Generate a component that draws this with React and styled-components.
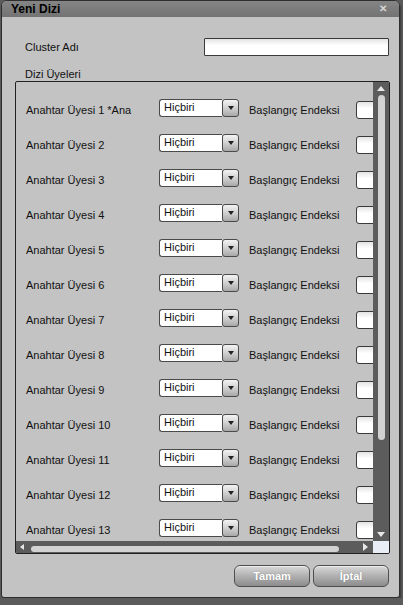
import React from "react";
import styled, { createGlobalStyle } from "styled-components";

const GlobalStyle = createGlobalStyle`
  html, body {
    margin: 0;
    padding: 0;
    background: #5b5b5b;
  }
  body {
    font-family: "Liberation Sans", Arial, sans-serif;
    font-size: 11px;
    color: #111;
  }
`;

const Dialog = styled.div`
  width: 399px;
  height: 598px;
  margin-left: 1px;
  background: #c3c3c3;
  border: 1px solid #2e2e2e;
  border-radius: 6px 6px 3px 3px;
  display: flex;
  flex-direction: column;
  overflow: hidden;
  box-sizing: border-box;
  box-shadow: 1px 2px 2px rgba(0, 0, 0, 0.4);
`;

const TitleBar = styled.div`
  height: 16px;
  background: linear-gradient(#858585, #737373);
  display: flex;
  align-items: center;
  justify-content: space-between;
  padding: 0 12px 0 9px;
  flex-shrink: 0;
`;

const Title = styled.span`
  font-weight: 700;
  font-size: 12px;
  color: #000;
`;

const Close = styled.span`
  color: #d6d6d6;
  font-size: 10px;
  font-weight: 700;
  line-height: 1;
`;

const Body = styled.div`
  flex: 1;
  display: flex;
  flex-direction: column;
  padding: 21px 10px 0 13px;
`;

const FieldRow = styled.div`
  display: flex;
  align-items: center;
  justify-content: space-between;
  padding-left: 10px;
  height: 18px;
`;

const Label = styled.span`
  white-space: nowrap;
`;

const Section = styled.div`
  margin-top: 11px;
  padding-left: 10px;
  height: 14px;
  line-height: 14px;
`;

const TextInput = styled.div`
  width: ${(p) => p.$w}px;
  height: 18px;
  box-sizing: border-box;
  background: linear-gradient(#e4e4e4, #ffffff 40%);
  border: 1px solid #3a3a3a;
  border-radius: ${(p) => (p.$round ? "3px" : "1px")};
  flex-shrink: 0;
`;

const Panel = styled.div`
  height: 473px;
  width: 375px;
  box-sizing: border-box;
  border: 1px solid #222;
  border-radius: 2px;
  display: grid;
  grid-template-columns: 1fr 16px;
  grid-template-rows: 1fr 12px;
  overflow: hidden;
`;

const Scroller = styled.div`
  overflow: hidden;
  padding: 10px 0 0 10px;
`;

const MemberRow = styled.div`
  height: 35px;
  display: flex;
  align-items: center;
  width: 420px;
`;

const MemberLabel = styled.span`
  width: 133px;
  white-space: nowrap;
`;

const Select = styled.div`
  width: 80px;
  height: 18px;
  box-sizing: border-box;
  display: flex;
  margin-top: -3px;
`;

const SelectValue = styled.div`
  flex: 1;
  background: #fff;
  border: 1px solid #4a4a4a;
  border-right: none;
  border-radius: 3px 0 0 3px;
  padding: 0 4px;
  line-height: 14px;
  font-size: 11px;
`;

const SelectButton = styled.div`
  width: 17px;
  box-sizing: border-box;
  border: 1px solid #4a4a4a;
  border-radius: 3px;
  background: linear-gradient(#f4f4f4, #c9c9c9 60%, #a8a8a8);
  display: flex;
  align-items: center;
  justify-content: center;
  &::after {
    content: "";
    border-left: 3px solid transparent;
    border-right: 3px solid transparent;
    border-top: 4px solid #222;
  }
`;

const EndLabel = styled.span`
  margin-left: 10px;
  width: 107px;
  white-space: nowrap;
`;

const VBar = styled.div`
  background: #5c5c5c;
  display: flex;
  flex-direction: column;
  align-items: center;
  padding: 4px 0 4px;
`;

const ArrowUp = styled.div`
  border-left: 4px solid transparent;
  border-right: 4px solid transparent;
  border-bottom: 5px solid #e8e8e8;
`;

const ArrowDown = styled.div`
  border-left: 4px solid transparent;
  border-right: 4px solid transparent;
  border-top: 5px solid #e8e8e8;
`;

const VThumb = styled.div`
  width: 7px;
  height: 345px;
  margin-top: 4px;
  background: #d2d2d2;
  border-radius: 4px;
`;

const Spacer = styled.div`
  flex: 1;
`;

const HBar = styled.div`
  background: #5c5c5c;
  display: flex;
  align-items: center;
  padding: 0 5px 0 4px;
`;

const ArrowLeft = styled.div`
  border-top: 3px solid transparent;
  border-bottom: 3px solid transparent;
  border-right: 4px solid #e8e8e8;
`;

const ArrowRight = styled.div`
  border-top: 4px solid transparent;
  border-bottom: 4px solid transparent;
  border-left: 5px solid #e8e8e8;
`;

const HThumb = styled.div`
  width: 308px;
  height: 6px;
  margin-left: 7px;
  margin-top: 4px;
  background: #d2d2d2;
  border-radius: 4px;
`;

const Corner = styled.div`
  background: #e9edf5;
`;

const Footer = styled.div`
  display: flex;
  justify-content: flex-end;
  gap: 3px;
  padding: 11px 0 0;
`;

const Button = styled.button`
  width: 76px;
  height: 22px;
  border: 1px solid #4e4e4e;
  border-radius: 6px;
  background: linear-gradient(#dadada, #b4b4b4 45%, #8c8c8c);
  color: #fff;
  font-family: "Liberation Sans", Arial, sans-serif;
  font-size: 11px;
  font-weight: 700;
  text-shadow: 0 0 1px #777;
  box-shadow: inset 0 1px 0 #eee;
  padding: 0;
`;

const members = Array.from({ length: 13 }, (_, i) =>
  i === 0 ? "Anahtar Üyesi 1 *Ana" : `Anahtar Üyesi ${i + 1}`
);

const App = () => (
  <>
    <GlobalStyle />
    <Dialog>
      <TitleBar>
        <Title>Yeni Dizi</Title>
        <Close>✕</Close>
      </TitleBar>
      <Body>
        <FieldRow>
          <Label>Cluster Adı</Label>
          <TextInput $w={185} />
        </FieldRow>
        <Section>Dizi Üyeleri</Section>
        <Panel>
          <Scroller>
            {members.map((m) => (
              <MemberRow key={m}>
                <MemberLabel>{m}</MemberLabel>
                <Select>
                  <SelectValue>Hiçbiri</SelectValue>
                  <SelectButton />
                </Select>
                <EndLabel>Başlangıç Endeksi</EndLabel>
                <TextInput $w={40} $round />
              </MemberRow>
            ))}
          </Scroller>
          <VBar>
            <ArrowUp />
            <VThumb />
            <Spacer />
            <ArrowDown />
          </VBar>
          <HBar>
            <ArrowLeft />
            <HThumb />
            <Spacer />
            <ArrowRight />
          </HBar>
          <Corner />
        </Panel>
        <Footer>
          <Button>Tamam</Button>
          <Button>İptal</Button>
        </Footer>
      </Body>
    </Dialog>
  </>
);

export default App;
